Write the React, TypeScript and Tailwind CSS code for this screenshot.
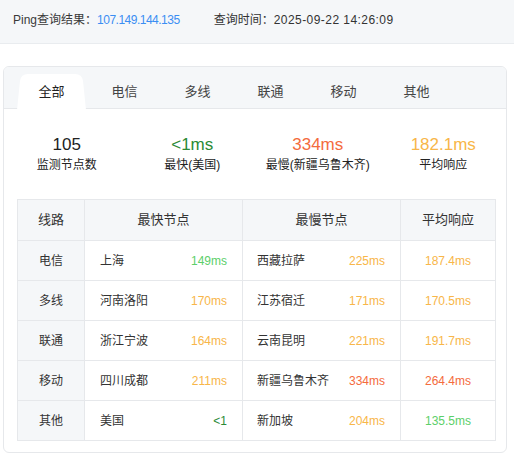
import React from "react";

const C = {
  lg: "text-[#5ccf6a]",
  y: "text-[#f8b649]",
  r: "text-[#f46b3d]",
  dg: "text-[#2a8a35]",
};

type Row = {
  line: string;
  fast: string;
  fastMs: string;
  fastC: string;
  slow: string;
  slowMs: string;
  slowC: string;
  avg: string;
  avgC: string;
};

const rows: Row[] = [
  { line: "电信", fast: "上海", fastMs: "149ms", fastC: C.lg, slow: "西藏拉萨", slowMs: "225ms", slowC: C.y, avg: "187.4ms", avgC: C.y },
  { line: "多线", fast: "河南洛阳", fastMs: "170ms", fastC: C.y, slow: "江苏宿迁", slowMs: "171ms", slowC: C.y, avg: "170.5ms", avgC: C.y },
  { line: "联通", fast: "浙江宁波", fastMs: "164ms", fastC: C.y, slow: "云南昆明", slowMs: "221ms", slowC: C.y, avg: "191.7ms", avgC: C.y },
  { line: "移动", fast: "四川成都", fastMs: "211ms", fastC: C.y, slow: "新疆乌鲁木齐", slowMs: "334ms", slowC: C.r, avg: "264.4ms", avgC: C.r },
  { line: "其他", fast: "美国", fastMs: "<1", fastC: C.dg, slow: "新加坡", slowMs: "204ms", slowC: C.y, avg: "135.5ms", avgC: C.lg },
];

const tabs = ["全部", "电信", "多线", "联通", "移动", "其他"];

export default function App() {
  return (
    <div
      className="w-[514px] h-[460px] bg-white text-[#333] overflow-hidden"
      style={{ fontFamily: '"Liberation Sans", "Noto Sans CJK SC", sans-serif' }}
    >
      {/* header */}
      <div className="h-[44px] bg-[#f5f7f9] border-b border-[#e9ecef] flex items-center pl-[13px] text-[12px] pb-[4px]">
        <span className="text-[#3a3a3a]">Ping查询结果：</span>
        <span className="text-[#3b8ef3] tracking-[-0.5px]">107.149.144.135</span>
        <span className="ml-[34px]">查询时间：</span>
        <span className="tracking-[0.45px]">2025-09-22 14:26:09</span>
      </div>

      {/* card */}
      <div className="mt-[22px] ml-[3px] w-[504px] h-[387px] border border-[#e6e8eb] rounded-[6px] overflow-hidden">
        {/* tabs */}
        <div className="h-[42px] bg-[#f5f7f9] border-b border-[#e6e8eb] flex items-end pl-[11px]">
          {tabs.map((t, i) => (
            <div key={t} className="w-[73px] h-[35px] relative flex items-center justify-center text-[13px] mb-[-1px]">
              {i === 0 && (
                <svg className="absolute left-[2px] top-0" width="69" height="36" viewBox="0 0 69 36">
                  <path d="M0 36 L3 7 Q4 0 11 0 L58 0 Q65 0 66 7 L69 36 Z" fill="#ffffff" />
                </svg>
              )}
              <span className={"relative " + (i === 0 ? "text-[#222]" : "text-[#444]")}>{t}</span>
            </div>
          ))}
        </div>

        {/* stats */}
        <div className="grid grid-cols-4 pt-[26px]">
          {[
            { v: "105", c: "text-[#222]", l: "监测节点数" },
            { v: "<1ms", c: "text-[#2a8a35]", l: "最快(美国)" },
            { v: "334ms", c: "text-[#f46b3d]", l: "最慢(新疆乌鲁木齐)" },
            { v: "182.1ms", c: "text-[#f8b649]", l: "平均响应" },
          ].map((s) => (
            <div key={s.l} className="flex flex-col items-center">
              <div className={"text-[17px] leading-[20px] font-medium " + s.c}>{s.v}</div>
              <div className="text-[12px] leading-[18px] mt-[1px] text-[#222]">{s.l}</div>
            </div>
          ))}
        </div>

        {/* table */}
        <table className="mt-[25px] ml-[13px] w-[478px] border-collapse text-[12px] table-fixed">
          <colgroup>
            <col className="w-[67px]" />
            <col className="w-[158px]" />
            <col className="w-[158px]" />
            <col className="w-[95px]" />
          </colgroup>
          <thead>
            <tr className="h-[41px] bg-[#f5f7f9]">
              {["线路", "最快节点", "最慢节点", "平均响应"].map((h) => (
                <th key={h} className="border border-[#e6e8eb] font-normal text-[13px] text-[#333] text-center">
                  {h}
                </th>
              ))}
            </tr>
          </thead>
          <tbody>
            {rows.map((r) => (
              <tr key={r.line} className="h-[40px]">
                <td className="border border-[#e6e8eb] bg-[#f5f7f9] text-center">{r.line}</td>
                <td className="border border-[#e6e8eb] px-[15px]">
                  <div className="flex justify-between">
                    <span>{r.fast}</span>
                    <span className={r.fastC}>{r.fastMs}</span>
                  </div>
                </td>
                <td className="border border-[#e6e8eb] pl-[14px] pr-[15px]">
                  <div className="flex justify-between">
                    <span>{r.slow}</span>
                    <span className={r.slowC}>{r.slowMs}</span>
                  </div>
                </td>
                <td className={"border border-[#e6e8eb] text-center " + r.avgC}>{r.avg}</td>
              </tr>
            ))}
          </tbody>
        </table>
      </div>
    </div>
  );
}
